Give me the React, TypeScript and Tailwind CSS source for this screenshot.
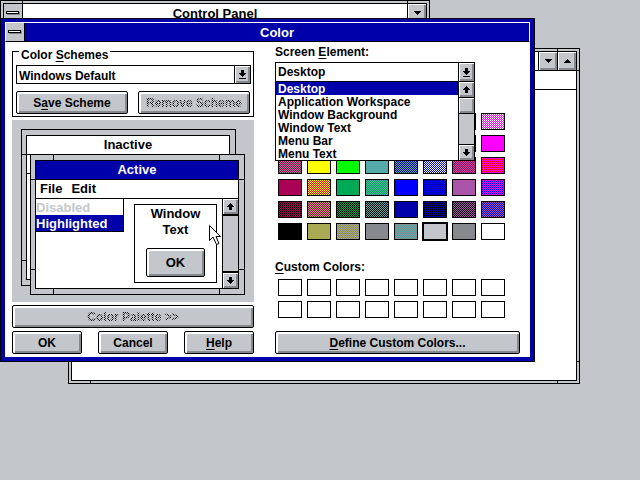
import React from "react";

const CHECK = "bg-[length:2px_2px]";

/* Basic colors, row by row; dithered entries mix two colors pixel by pixel. */
const BASIC: string[] = [
  "bg-[#ffaaaa]", "bg-[#ffffaa]", "bg-[#aaffaa]", "bg-[#55ffaa]", "bg-[#aaffff]", "bg-[#0055ff]", "bg-[#ff55aa]",
  `${CHECK} bg-[repeating-conic-gradient(#ff00ff_0_25%,#fff_0_50%)]`,
  "bg-[#ff0000]", "bg-[#ffff00]", "bg-[#55ff00]", "bg-[#00ff55]", "bg-[#00ffff]", "bg-[#0055aa]", "bg-[#aa55aa]",
  "bg-[#ff00ff]",
  `${CHECK} bg-[repeating-conic-gradient(#868a8e_0_25%,#aa0055_0_50%)]`,
  "bg-[#ffff00]",
  "bg-[#00ff00]",
  "bg-[#55aaaa]",
  `${CHECK} bg-[repeating-conic-gradient(#55aaaa_0_25%,#0000aa_0_50%)]`,
  `${CHECK} bg-[repeating-conic-gradient(#0000ff_0_25%,#fff_0_50%)]`,
  `${CHECK} bg-[repeating-conic-gradient(#aa55aa_0_25%,#aa0055_0_50%)]`,
  `${CHECK} bg-[repeating-conic-gradient(#ff0000_0_25%,#ff00ff_0_50%)]`,
  "bg-[#aa0055]",
  `${CHECK} bg-[repeating-conic-gradient(#ff0000_0_25%,#ffff00_0_50%)]`,
  "bg-[#00aa55]",
  `${CHECK} bg-[repeating-conic-gradient(#00aa55_0_25%,#55aaaa_0_50%)]`,
  "bg-[#0000ff]",
  `${CHECK} bg-[repeating-conic-gradient(#0000ff_0_25%,#0000aa_0_50%)]`,
  "bg-[#aa55aa]",
  `${CHECK} bg-[repeating-conic-gradient(#0000ff_0_25%,#ff00ff_0_50%)]`,
  `${CHECK} bg-[repeating-conic-gradient(#aa0055_0_25%,#000_0_50%)]`,
  `${CHECK} bg-[repeating-conic-gradient(#aa0055_0_25%,#aaaa55_0_50%)]`,
  `${CHECK} bg-[repeating-conic-gradient(#00aa55_0_25%,#000_0_50%)]`,
  `${CHECK} bg-[repeating-conic-gradient(#000_0_25%,#55aaaa_0_50%)]`,
  "bg-[#0000aa]",
  `${CHECK} bg-[repeating-conic-gradient(#000_0_25%,#0000aa_0_50%)]`,
  `${CHECK} bg-[repeating-conic-gradient(#aa55aa_0_25%,#000_0_50%)]`,
  `${CHECK} bg-[repeating-conic-gradient(#0000ff_0_25%,#aa55aa_0_50%)]`,
  "bg-black",
  "bg-[#aaaa55]",
  `${CHECK} bg-[repeating-conic-gradient(#868a8e_0_25%,#aaaa55_0_50%)]`,
  "bg-[#868a8e]",
  `${CHECK} bg-[repeating-conic-gradient(#868a8e_0_25%,#55aaaa_0_50%)]`,
  "bg-[#c3c7cb]",
  "bg-[#868a8e]",
  "bg-white",
];
const SELECTED = 45;

const ELEMENTS = ["Desktop", "Application Workspace", "Window Background", "Window Text", "Menu Bar", "Menu Text"];

function Key({ children }: { children: React.ReactNode }) {
  return <span className="underline decoration-1 underline-offset-2">{children}</span>;
}

function PushButton({ className = "", disabled = false, children }: { className?: string; disabled?: boolean; children: React.ReactNode }) {
  return (
    <button
      type="button"
      disabled={disabled}
      className={`flex items-center justify-center rounded-[2px] border border-black bg-[#c3c7cb] shadow-[inset_2px_2px_0_#fff,inset_-2px_-2px_0_#868a8e] ${className}`}
    >
      {disabled ? (
        <span className="bg-[repeating-conic-gradient(#000_0_25%,#c3c7cb_0_50%)] bg-[length:2px_2px] bg-clip-text text-transparent">
          {children}
        </span>
      ) : (
        <span>{children}</span>
      )}
    </button>
  );
}

type Glyph = "up" | "down" | "drop" | "min" | "max" | "none";

const GLYPHS: Record<Glyph, string> = {
  up: "M3 0h1v1h1v1h1v1h1v1H5v3H2V4H0V3h1V2h1V1h1z",
  down: "M2 0h3v3h2v1H6v1H5v1H4v1H3V6H2V5H1V4H0V3h2z",
  drop: "M2 0h3v3h2v1H6v1H5v1H4v1H3V6H2V5H1V4H0V3h2zM0 8h7v1H0z",
  min: "M0 0h7v1H6v1H5v1H4v1H3V3H2V2H1V1H0z",
  max: "M3 0h1v1h1v1h1v1h1v1H0V3h1V2h1V1h1z",
  none: "",
};

function SmallButton({ glyph, label, className }: { glyph: Glyph; label: string; className: string }) {
  const h = glyph === "drop" ? 9 : glyph === "min" || glyph === "max" ? 4 : 7;
  return (
    <button
      type="button"
      aria-label={label}
      className={`flex shrink-0 items-center justify-center bg-[#c3c7cb] shadow-[inset_1px_1px_0_#fff,inset_-2px_-2px_0_#868a8e] ${className}`}
    >
      <svg width="7" height={h} viewBox={`0 0 7 ${h}`} shapeRendering="crispEdges" aria-hidden="true">
        <path d={GLYPHS[glyph]} />
      </svg>
    </button>
  );
}

function ControlMenu() {
  return (
    <button type="button" aria-label="Control menu" className="flex w-[19px] shrink-0 items-center justify-center border-r border-black bg-[#c3c7cb]">
      <svg width="14" height="4" viewBox="0 0 14 4" shapeRendering="crispEdges" aria-hidden="true">
        <path d="M1 1h13v3H1z" fill="#868a8e" />
        <path d="M0 0h13v3H0z" />
        <path d="M1 1h11v1H1z" fill="#fff" />
      </svg>
    </button>
  );
}

type FrameProps = {
  className: string;
  pad: string;
  wide?: boolean;
  sideNotchesOnly?: boolean;
  children: React.ReactNode;
};

/* Sizing border of a window: outer line, gray band, inner line and the corner notches. */
function Frame({ className, pad, children, wide = false, sideNotchesOnly = false }: FrameProps) {
  const v = wide ? "absolute w-px h-1.5 bg-black" : "absolute w-px h-[3px] bg-black";
  const h = wide ? "absolute h-px w-1.5 bg-black" : "absolute h-px w-[3px] bg-black";
  const near = wide ? "left-[22px]" : "left-[21px]";
  const far = wide ? "right-6" : "right-[21px]";
  const low = wide ? "top-6" : "top-[21px]";
  const high = wide ? "bottom-6" : "bottom-[21px]";
  return (
    <section className={`absolute flex border border-black bg-[#c3c7cb] ${pad} ${className}`}>
      {!sideNotchesOnly && (
        <>
          <i className={`${v} ${near} top-0`} />
          <i className={`${v} ${far} top-0`} />
          <i className={`${v} ${near} bottom-0`} />
          <i className={`${v} ${far} bottom-0`} />
        </>
      )}
      <i className={`${h} ${low} left-0`} />
      <i className={`${h} ${low} right-0`} />
      <i className={`${h} ${high} left-0`} />
      <i className={`${h} ${high} right-0`} />
      <div className="relative flex min-w-0 flex-1 flex-col border border-black bg-white">{children}</div>
    </section>
  );
}

function Preview() {
  return (
    <div className="relative mt-[3px] h-[182px] bg-[#c3c7cb] text-[13px] leading-4">
      <Frame wide sideNotchesOnly pad="pt-[5px] pr-[5px] pb-[5px] pl-1" className="left-[9px] top-[9px] h-[157px] w-[215px]">
        <div className="h-[19px] border-b border-black text-center leading-[18px]">Inactive</div>
        <div className="h-[19px] border-b border-black" />
      </Frame>
      <Frame wide pad="pt-[5px] pr-[5px] pb-[5px] pl-1" className="left-[18px] top-[34px] h-[141px] w-[215px]">
        <div className="h-[19px] border-b border-black bg-[#0000aa] text-center leading-[18px] text-white">Active</div>
        <div className="flex h-[19px] gap-[9px] border-b border-black pl-1 leading-[18px]">
          <span>File</span>
          <span>Edit</span>
        </div>
        <div className="flex flex-1">
          <div className="w-[88px] leading-[18px]">
            <div className="h-4 border-r border-black text-[#c3c7cb]">Disabled</div>
            <div className="h-[17px] border-r border-b border-black bg-[#0000aa] text-white">Highlighted</div>
          </div>
          <div className="mt-[5px] ml-2.5 flex h-[79px] w-[83px] flex-col items-center border border-black pt-px text-center">
            <span>Window</span>
            <span>Text</span>
            <PushButton className="mt-2.5 h-[29px] w-[59px]">OK</PushButton>
          </div>
          <div className="ml-auto flex w-4 flex-col border-l border-black bg-[#c3c7cb]">
            <SmallButton glyph="up" label="Scroll up" className="h-[15px]" />
            <div className="flex-1 border-y-2 border-black" />
            <SmallButton glyph="down" label="Scroll down" className="h-[15px]" />
          </div>
        </div>
      </Frame>
      <svg className="absolute left-[197px] top-[105px]" width="13" height="21" viewBox="0 0 13 21" aria-hidden="true">
        <path d="M.5 .5V15.500L4 12L7.500 19.500L10 18.500L7 11.500H11.500Z" fill="#fff" stroke="#000" />
      </svg>
    </div>
  );
}

function LeftColumn() {
  return (
    <div className="flex w-[242px] flex-col">
      <fieldset className="h-[75px] border border-black pt-1 pr-0.5 pb-0.5 pl-[3px]">
        <legend className="ml-[3px] h-[19px] px-0.5 pt-2 leading-[11px]">
          <label htmlFor="scheme">
            Color <Key>S</Key>chemes
          </label>
        </legend>
        <div className="flex h-[19px] border border-black bg-white">
          <select id="scheme" className="min-w-0 flex-1 appearance-none bg-white pt-0.5 pl-0.5 outline-none">
            <option>Windows Default</option>
          </select>
          <div className="flex border-l border-black">
            <SmallButton glyph="drop" label="Open color schemes" className="w-[15px]" />
          </div>
        </div>
        <div className="mt-[7px] flex gap-2.5 pr-px">
          <PushButton className="h-[23px] flex-1">
            S<Key>a</Key>ve Scheme
          </PushButton>
          <PushButton disabled className="h-[23px] flex-1">
            Re<Key>m</Key>ove Scheme
          </PushButton>
        </div>
      </fieldset>
      <Preview />
      <PushButton disabled className="mt-[3px] h-[23px]">
        Color <Key>P</Key>alette &gt;&gt;
      </PushButton>
      <div className="mt-[3px] flex gap-4">
        <PushButton className="h-[23px] flex-1">OK</PushButton>
        <PushButton className="h-[23px] flex-1">Cancel</PushButton>
        <PushButton className="h-[23px] flex-1">
          <Key>H</Key>elp
        </PushButton>
      </div>
    </div>
  );
}

function RightColumn() {
  return (
    <div className="flex w-[245px] flex-col pt-1 leading-3">
      <label htmlFor="element">
        Screen <Key>E</Key>lement:
      </label>
      <div className="relative z-10 mt-1 flex h-5 w-[200px] border border-black bg-white">
        <select id="element" className="min-w-0 flex-1 appearance-none bg-white pl-0.5 leading-[18px] outline-none">
          <option>Desktop</option>
        </select>
        <div className="flex border-l border-black">
          <SmallButton glyph="drop" label="Open screen elements" className="w-[15px]" />
        </div>
        <div className="absolute -left-px top-[18px] flex h-20 w-[200px] border border-black bg-white">
          <ul role="listbox" aria-label="Screen Element" className="flex-1 overflow-hidden">
            {ELEMENTS.map((name, i) => (
              <li
                key={name}
                role="option"
                aria-selected={i === 0}
                className={`h-[13px] pl-0.5 leading-[15px] whitespace-nowrap ${i === 0 ? "bg-[#0000aa] text-white" : ""}`}
              >
                {name}
              </li>
            ))}
          </ul>
          <div className="flex w-4 flex-col border-l border-black bg-[#c3c7cb]">
            <SmallButton glyph="up" label="Scroll up" className="h-[15px]" />
            <div className="border-y border-black">
              <SmallButton glyph="none" label="Scroll position" className="h-[15px] w-full" />
            </div>
            <div className="flex-1 border-b border-black" />
            <SmallButton glyph="down" label="Scroll down" className="h-[15px]" />
          </div>
        </div>
      </div>
      <div className="mt-[31px] ml-[3px] grid grid-cols-[repeat(8,24px)] gap-[5px]">
        {BASIC.map((fill, i) => (
          <button
            key={i}
            type="button"
            aria-label={`Basic color ${i + 1}`}
            aria-pressed={i === SELECTED}
            className={`h-[17px] border border-black ${fill} ${i === SELECTED ? "outline outline-black" : ""}`}
          />
        ))}
      </div>
      <h2 className="mt-[21px]">
        <Key>C</Key>ustom Colors:
      </h2>
      <div className="mt-1.5 ml-[3px] grid grid-cols-[repeat(8,24px)] gap-[5px]">
        {Array.from({ length: 16 }, (_, i) => (
          <button key={i} type="button" aria-label={`Custom color ${i + 1}`} className="h-[17px] border border-black bg-white" />
        ))}
      </div>
      <PushButton className="mt-[13px] h-[23px]">
        <Key>D</Key>efine Custom Colors...
      </PushButton>
    </div>
  );
}

export default function App() {
  return (
    <main className="relative h-screen overflow-hidden bg-[#c3c7cb] font-['Liberation_Sans',Arial,sans-serif] text-xs font-bold text-black">
      <Frame pad="p-0.5" className="left-[68px] top-12 h-[336px] w-[512px]">
        <div className="flex h-[19px] justify-end border-b border-black">
          <div className="flex border-l border-black">
            <SmallButton glyph="min" label="Minimize" className="w-[18px]" />
          </div>
          <div className="flex border-l border-black">
            <SmallButton glyph="max" label="Maximize" className="w-[18px]" />
          </div>
        </div>
        <div className="h-[19px] border-b border-black" />
      </Frame>

      <Frame pad="p-0.5" className="left-0 top-0 h-[200px] w-[430px]">
        <div className="flex h-[19px] border-b border-black">
          <ControlMenu />
          <h1 className="flex-1 text-center text-[13px] leading-5">Control Panel</h1>
          <div className="flex border-l border-black">
            <SmallButton glyph="min" label="Minimize" className="w-[18px]" />
          </div>
        </div>
      </Frame>

      <section role="dialog" aria-label="Color" className="absolute left-0 top-[18px] w-[535px] border border-black bg-[#0000aa] px-1 pt-[3px] pb-1">
        <header className="flex h-5 border-x border-t border-b border-white border-b-black bg-[#0000aa]">
          <ControlMenu />
          <h1 className="flex-1 text-center text-[13px] leading-5 text-white">Color</h1>
        </header>
        <div className="flex gap-[21px] bg-white pb-[3px] pl-[7px]">
          <LeftColumn />
          <RightColumn />
        </div>
      </section>
    </main>
  );
}
